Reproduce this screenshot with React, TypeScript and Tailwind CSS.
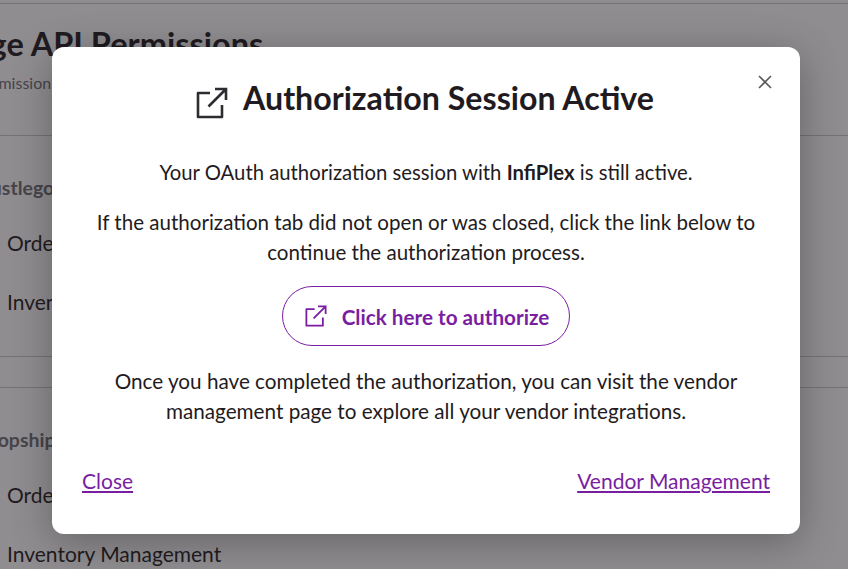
import React from 'react'

const font = { fontFamily: 'Lato, "Noto Sans", sans-serif' }

function ExternalIcon({ className }: { className: string }) {
  return (
    <svg className={className} viewBox="0 0 32 32" fill="none" stroke="currentColor" strokeWidth={2.6}>
      <path d="M14 6H2v24h24V18" strokeLinejoin="round" />
      <path d="M12.5 19.5 30 2M19 2h11v11" />
    </svg>
  )
}

function PageBehind() {
  return (
    <div className="h-[569px] overflow-hidden bg-white text-[#1f1b21]">
      <div className="mt-[3px] border-t border-[#c9c9c9] pt-[20px]">
        <div className="-ml-[92px] text-[32.5px] leading-[40px] font-bold whitespace-nowrap">Manage API Permissions</div>
        <div className="mt-[7px] -ml-[25px] text-[16px] leading-[24px] text-[#6f6d72] whitespace-nowrap">Permissions</div>
      </div>
      <div className="mt-[40px] border-t border-[#c9c9c9] pt-[40px]">
        <div className="-ml-[24px] text-[19.5px] leading-[24px] font-bold text-[#6f6d72]">Hustlegod</div>
        <div className="mt-[29px] pl-[7px] text-[21px] leading-[28px]">Order Management</div>
        <div className="mt-[31px] pl-[7px] text-[21px] leading-[28px]">Inventory Management</div>
      </div>
      <div className="mt-[40px] h-[32px] border-t border-b border-[#c9c9c9]" />
      <div className="pt-[40px]">
        <div className="-ml-[24px] text-[19.5px] leading-[24px] font-bold text-[#6f6d72]">Dropship</div>
        <div className="mt-[29px] pl-[7px] text-[21px] leading-[28px]">Order Management</div>
        <div className="mt-[31px] pl-[7px] text-[21px] leading-[28px]">Inventory Management</div>
      </div>
    </div>
  )
}

export default function App() {
  return (
    <div className="relative h-[569px] w-[848px] overflow-hidden" style={font}>
      <PageBehind />
      <div className="absolute inset-0 bg-[#1f1b21]/50 pl-[52px] pt-[47px]">
        <div className="relative flex h-[487px] w-[748px] flex-col rounded-[12px] bg-white px-[30px] pt-[29px] text-[#1f1b21] shadow-[0_8px_40px_rgba(0,0,0,0.3)]">
          <button className="absolute right-[28px] top-[28px] text-[#59575c]">
            <svg className="h-[14px] w-[14px]" viewBox="0 0 14 14" fill="none" stroke="currentColor" strokeWidth={1.6}>
              <path d="M1 1l12 12M13 1 1 13" />
            </svg>
          </button>

          <div className="flex items-center justify-center gap-[15px] pr-[2px]">
            <ExternalIcon className="mt-[11px] h-[32px] w-[32px] text-[#2e2b31]" />
            <h2 className="text-[32.15px] leading-[36px] font-bold">Authorization Session Active</h2>
          </div>

          <div className="mt-[38px] text-center leading-[30px]">
            <p className="text-[20.3px]">
              Your OAuth authorization session with <b>InfiPlex</b> is still active.
            </p>
            <p className="mt-[20px] text-[20.55px]">
              If the authorization tab did not open or was closed, click the link below to continue the authorization process.
            </p>
          </div>

          <div className="mt-[19px] flex justify-center">
            <button className="flex h-[60px] w-[288px] items-center justify-center gap-[15px] rounded-full border border-[#7a1ea1] pl-[2px] text-[#7a1ea1]">
              <ExternalIcon className="h-[22px] w-[22px]" />
              <span className="pt-[3px] text-[20.7px] font-bold">Click here to authorize</span>
            </button>
          </div>

          <p className="mt-[20px] text-center text-[20.7px] leading-[30px]">
            Once you have completed the authorization, you can visit the vendor management page to explore all your vendor integrations.
          </p>

          <div className="mt-[40px] flex justify-between text-[21px] leading-[30px] text-[#7a1ea1]">
            <a href="#" className="underline">Close</a>
            <a href="#" className="underline">Vendor Management</a>
          </div>
        </div>
      </div>
    </div>
  )
}
